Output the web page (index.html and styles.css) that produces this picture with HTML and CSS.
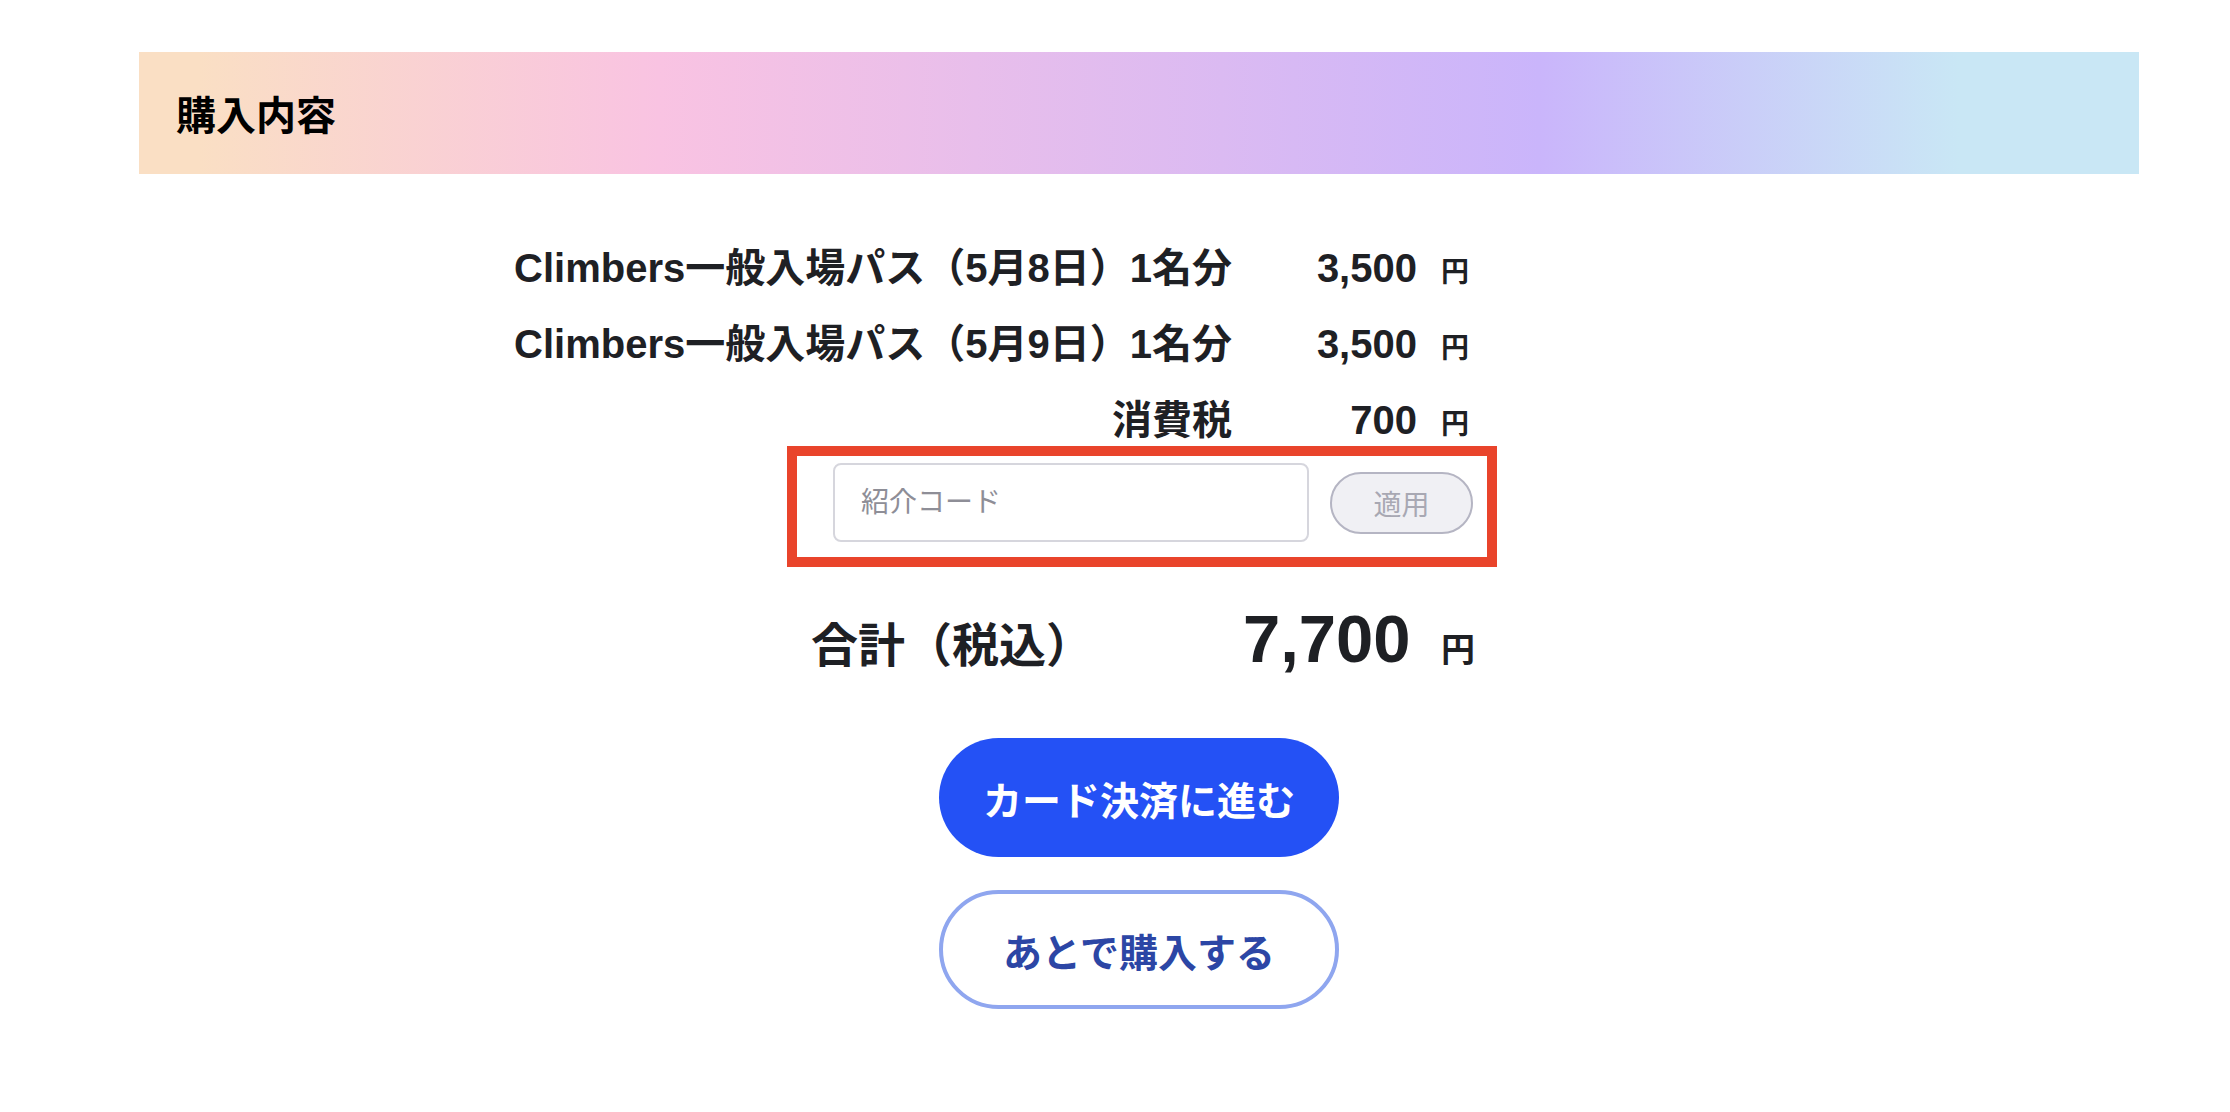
FILE: index.html
```html
<html>
  <head>
    <title>購入内容</title>
    <link rel="stylesheet" href="styles.css">
  </head>
  <body>
    <div class="page">
      <header class="section-head">購入内容</header>
      <main class="summary">
        <div class="line">
          <span class="line-label">Climbers一般入場パス（5月8日）1名分</span>
          <span class="line-price">3,500</span>
          <span class="yen">円</span>
        </div>
        <div class="line">
          <span class="line-label">Climbers一般入場パス（5月9日）1名分</span>
          <span class="line-price">3,500</span>
          <span class="yen">円</span>
        </div>
        <div class="line">
          <span class="line-label">消費税</span>
          <span class="line-price">700</span>
          <span class="yen">円</span>
        </div>
        <form class="code-box">
          <input class="code-input" type="text" placeholder="紹介コード" />
          <button class="code-apply" type="button" disabled>適用</button>
        </form>
        <div class="total">
          <span class="total-label">合計（税込）</span>
          <span class="total-amount">
            <span class="total-price">7,700</span>
            <span class="total-yen">円</span>
          </span>
        </div>
      </main>
      <div class="actions">
        <button class="btn btn-primary" type="button">カード決済に進む</button>
        <button class="btn btn-outline" type="button">あとで購入する</button>
      </div>
    </div>
  </body>
</html>
```

FILE: styles.css
```css
:root {
  --ink: hsl(220, 9%, 13%);
  --blue: hsl(227, 91%, 55%);
  --blue-soft: hsl(226, 75%, 75%);
  --blue-dark: hsl(227, 58%, 41%);
  --alert: hsl(8, 81%, 54%);
}

body {
  margin: 0;
  background-color: #fff;
  color: var(--ink);
  font-family: "Liberation Sans", "Noto Sans CJK JP", sans-serif;
}

div.page {
  width: 2000px;
  margin: 0 0 0 139px;
  padding: 52px 0 0 0;
}

header.section-head {
  display: flex;
  align-items: center;
  height: 122px;
  padding: 0 0 0 37px;
  font-size: 40px;
  font-weight: bold;
  color: #000;
  background: linear-gradient(90deg, #fadfc4 3%, #f9c3e2 26%, #cab5fb 70%, #c9e7f5 91%);
}

main.summary {
  width: 710px;
  margin: 68px 0 0 648px;
  display: flex;
  flex-direction: column;
}

div.line {
  display: flex;
  justify-content: flex-end;
  align-items: baseline;
  height: 52px; /* keep the CJK fallback from growing the rows */
  padding: 0 28px 0 0;
  font-size: 40px;
  font-weight: bold;
  line-height: 52px;
  margin: 0 0 24px 0;
}
div.line:nth-child(3) {
  margin: 0;
}
span.line-label {
  flex-shrink: 0;
  white-space: nowrap;
}
span.line-price {
  flex-shrink: 0;
  width: 185px;
  text-align: right;
}
span.yen {
  flex-shrink: 0;
  margin: 0 0 0 24px;
  font-size: 28px;
}

form.code-box {
  display: flex;
  align-items: center;
  gap: 21px;
  margin: 0;
  padding: 7px 13px 15px 36px;
  border: 10px solid var(--alert);
}
input.code-input {
  box-sizing: border-box;
  width: 476px;
  height: 79px;
  padding: 0 0 0 26px;
  border: 2px solid #d6d6dd;
  border-radius: 8px;
  font-family: inherit;
  font-size: 28px;
  color: var(--ink);
}
input.code-input::placeholder {
  color: #8e8e97;
}
button.code-apply {
  box-sizing: border-box;
  width: 143px;
  height: 62px;
  padding: 0;
  border: 2px solid #b5b5c3;
  border-radius: 31px;
  background-color: #f0f0f4;
  color: #a8a8b3;
  font-family: inherit;
  font-size: 28px;
}

div.total {
  display: flex;
  justify-content: space-between;
  align-items: baseline;
  height: 80px;
  margin: 32px 0 0 0;
  padding: 0 22px 0 24px;
  line-height: 80px;
  font-weight: bold;
}
span.total-label {
  font-size: 47px;
}
span.total-price {
  font-size: 67px;
}
span.total-yen {
  margin: 0 0 0 26px;
  font-size: 34px;
}

div.actions {
  display: flex;
  flex-direction: column;
  align-items: center;
  gap: 33px;
  margin: 59px 0 0 0;
}
button.btn {
  box-sizing: border-box;
  width: 400px;
  height: 119px;
  border-radius: 60px;
  font-family: "Noto Sans CJK JP", sans-serif;
  font-size: 39px;
  font-weight: bold;
  cursor: pointer;
}
button.btn-primary {
  border: none;
  background-color: var(--blue);
  color: #fff;
}
button.btn-outline {
  border: 4px solid var(--blue-soft);
  background-color: #fff;
  color: var(--blue-dark);
}
```
